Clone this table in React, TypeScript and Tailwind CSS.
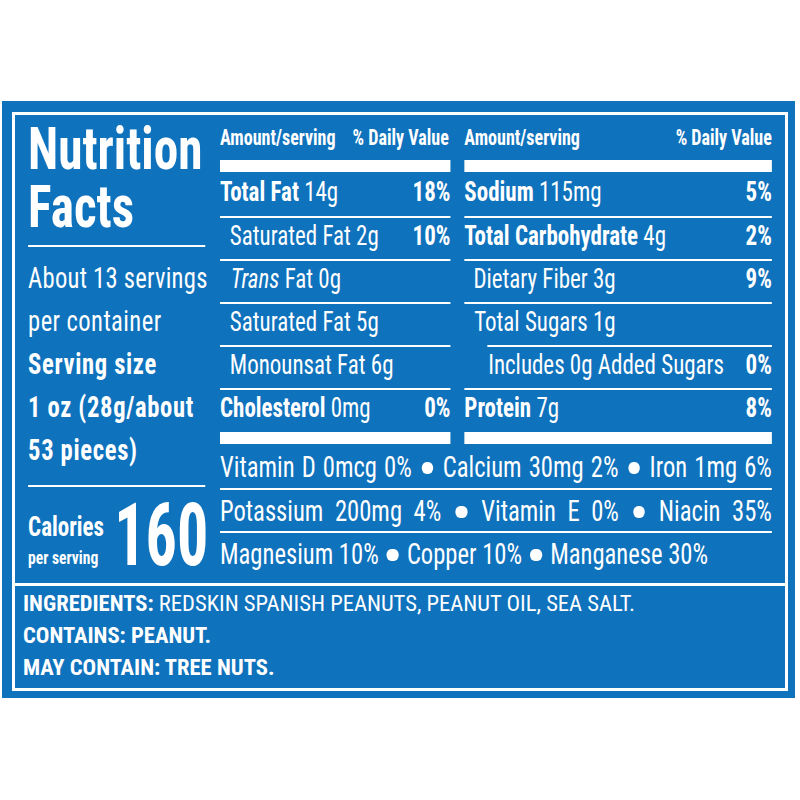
import type { ReactNode } from "react";

function Line({ className = "" }: { className?: string }) {
  return <div className={`h-[2px] bg-white ${className}`} />;
}

function Row({
  children,
  pct,
  h,
  indent = "",
}: {
  children: ReactNode;
  pct?: string;
  h: string;
  indent?: string;
}) {
  return (
    <div className={`flex justify-between items-start text-[28px] leading-[32px] ${h}`}>
      <div className={`whitespace-nowrap ${indent}`}>{children}</div>
      {pct ? <div className="font-bold">{pct}</div> : null}
    </div>
  );
}

function Dot() {
  return <span className="inline-block mx-[3px] w-[14.6px] h-[12px] rounded-full bg-white align-[3px]" />;
}

export default function App() {
  return (
    <div className="w-[800px] h-[800px] bg-white pt-[101px] pl-[2px] font-['Roboto_Condensed',sans-serif] text-white">
      <div className="w-[793px] h-[597px] bg-[#0f72bd] pt-[11px] pl-[10px] pr-[7px] pb-[7px]">
        <div className="h-full border-[3px] border-white flex flex-col overflow-hidden">
          {/* top section (drawn wide, then condensed horizontally) */}
          <div className="h-[468px] w-[939px] shrink-0 origin-top-left scale-x-[0.82] flex px-[16px] gap-[18px]">
            {/* left column */}
            <div className="w-[216px] shrink-0 flex flex-col pt-[5px]">
              <div className="text-[60px] leading-[58px] font-bold">Nutrition</div>
              <div className="text-[60px] leading-[58px] font-bold">Facts</div>
              <Line className="mt-[9px]" />
              <div className="mt-[9px] text-[30px] leading-[43px] whitespace-nowrap">
                <div className="tracking-[0.3px]">About 13 servings</div>
                <div className="tracking-[0.5px]">per container</div>
                <div className="font-bold tracking-[0.8px]">Serving size</div>
                <div className="font-bold tracking-[0.8px]">1 oz (28g/about</div>
                <div className="font-bold tracking-[0.8px]">53 pieces)</div>
              </div>
              <Line className="mt-[14px]" />
              <div className="mt-[4px] flex font-bold whitespace-nowrap">
                <div className="flex flex-col">
                  <div className="mt-[21px] text-[28px] leading-[30px]">Calories</div>
                  <div className="mt-[5px] text-[19px] leading-[22px]">per serving</div>
                </div>
                <div className="ml-[12px] text-[88px] leading-[88px]">
                  <span className="inline-block origin-left scale-x-[0.86]">160</span>
                </div>
              </div>
            </div>

            {/* right part */}
            <div className="flex-1 flex flex-col pt-[11px]">
              <div className="grid grid-cols-[281px_1fr] gap-x-[17px]">
                {/* column A */}
                <div className="flex flex-col">
                  <div className="flex justify-between pr-[2px] text-[22px] leading-[24px] font-bold whitespace-nowrap">
                    <span>Amount/serving</span>
                    <span>% Daily Value</span>
                  </div>
                  <div className="mt-[10px] h-[12px] bg-white" />
                  <Row h="h-[44px] pt-[4px]" pct="18%">
                    <b>Total Fat</b> 14g
                  </Row>
                  <Line />
                  <Row h="h-[41px] pt-[2px]" pct="10%" indent="pl-[12px]">
                    Saturated Fat 2g
                  </Row>
                  <Line />
                  <Row h="h-[41px] pt-[2px]" indent="pl-[13px]">
                    <i>Trans</i> Fat 0g
                  </Row>
                  <Line />
                  <Row h="h-[41px] pt-[2px]" indent="pl-[12px]">
                    Saturated Fat 5g
                  </Row>
                  <Line />
                  <Row h="h-[41px] pt-[2px]" indent="pl-[12px]">
                    Monounsat Fat 6g
                  </Row>
                  <Line />
                  <Row h="h-[42px] pt-[2px]" pct="0%">
                    <b>Cholesterol</b> 0mg
                  </Row>
                  <div className="h-[12px] bg-white" />
                </div>

                {/* column B */}
                <div className="flex flex-col">
                  <div className="flex justify-between text-[22px] leading-[24px] font-bold whitespace-nowrap">
                    <span>Amount/serving</span>
                    <span>% Daily Value</span>
                  </div>
                  <div className="mt-[10px] h-[12px] bg-white" />
                  <Row h="h-[44px] pt-[4px]" pct="5%">
                    <b>Sodium</b> 115mg
                  </Row>
                  <Line />
                  <Row h="h-[41px] pt-[2px]" pct="2%">
                    <b>Total Carbohydrate</b> 4g
                  </Row>
                  <Line />
                  <Row h="h-[41px] pt-[2px]" pct="9%" indent="pl-[11px]">
                    Dietary Fiber 3g
                  </Row>
                  <Line />
                  <Row h="h-[41px] pt-[2px]" indent="pl-[12px]">
                    Total Sugars 1g
                  </Row>
                  <Line className="ml-[28px]" />
                  <Row h="h-[41px] pt-[2px]" pct="0%" indent="pl-[29px]">
                    Includes 0g Added Sugars
                  </Row>
                  <Line />
                  <Row h="h-[42px] pt-[2px]" pct="8%">
                    <b>Protein</b> 7g
                  </Row>
                  <div className="h-[12px] bg-white" />
                </div>
              </div>

              {/* vitamins & minerals */}
              <div className="text-[30px] leading-[34px]">
                <div className="h-[44px] pt-[6px] text-justify [text-align-last:justify]">
                  Vitamin D 0mcg 0% <Dot /> Calcium 30mg 2% <Dot /> Iron 1mg 6%
                </div>
                <Line />
                <div className="h-[41px] pt-[4px] text-justify [text-align-last:justify]">
                  Potassium 200mg 4% <Dot /> Vitamin E 0% <Dot /> Niacin 35%
                </div>
                <Line />
                <div className="pt-[4px]">
                  Magnesium 10% <Dot /> Copper 10% <Dot /> Manganese 30%
                </div>
              </div>
            </div>
          </div>

          {/* ingredients */}
          <div className="flex-1 border-t-[3px] border-white pt-[2px] pl-[8px] text-[22.6px] leading-[32px]">
            <div>
              <b>INGREDIENTS:</b> REDSKIN SPANISH PEANUTS, PEANUT OIL, SEA SALT.
            </div>
            <div className="font-bold">CONTAINS: PEANUT.</div>
            <div className="font-bold">MAY CONTAIN: TREE NUTS.</div>
          </div>
        </div>
      </div>
    </div>
  );
}
